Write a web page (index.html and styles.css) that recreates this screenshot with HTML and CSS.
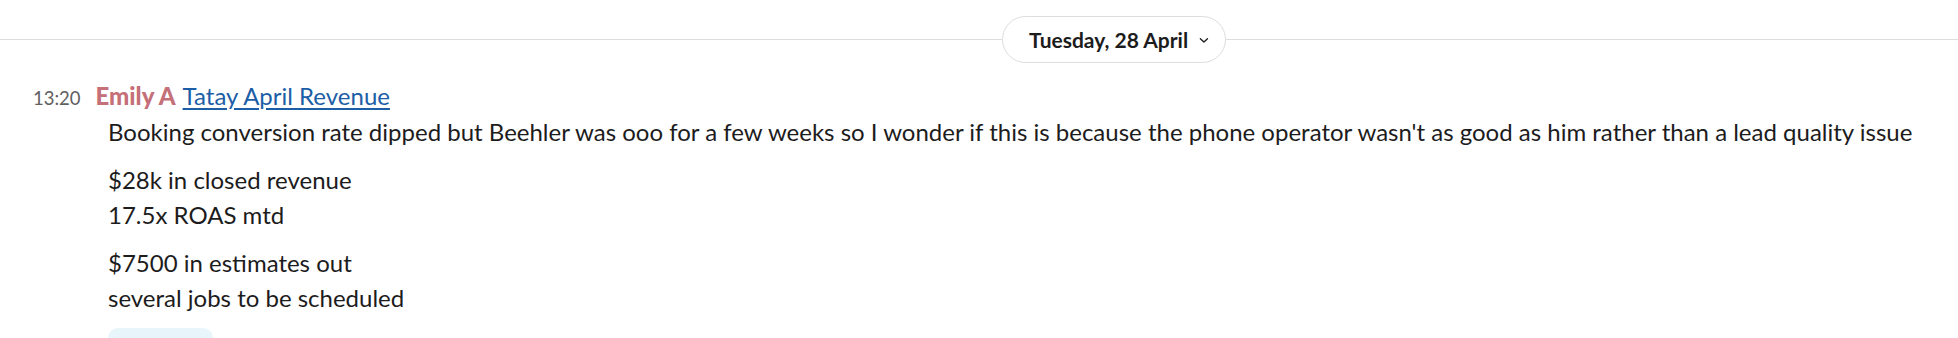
FILE: index.html
```html
<!DOCTYPE html>
<html lang="en">
<head>
<meta charset="utf-8">
<title>Message</title>
<link rel="stylesheet" href="styles.css">
</head>
<body>
<div class="day-divider">
  <div class="rule rule-left"></div>
  <button class="day-pill">
    <span class="day-label">Tuesday, 28 April</span>
    <svg class="chevron" width="11" height="7" viewBox="0 0 11 7"><path d="M1.5 1.5 L5.5 5.2 L9.5 1.5" fill="none" stroke="#1d1c1d" stroke-width="1.5" stroke-linecap="round" stroke-linejoin="round"/></svg>
  </button>
  <div class="rule rule-right"></div>
</div>
<div class="message">
  <div class="msg-header">
    <span class="time">13:20</span>
    <span class="sender">Emily A</span>
    <a class="title-link" href="#">Tatay April Revenue</a>
  </div>
  <div class="msg-body">
    <p class="para">Booking conversion rate dipped but Beehler was ooo for a few weeks so I wonder if this is because the phone operator wasn't as good as him rather than a lead quality issue</p>
    <p class="para">$28k in closed revenue<br>17.5x ROAS mtd</p>
    <p class="para">$7500 in estimates out<br>several jobs to be scheduled</p>
    <div class="reaction"></div>
  </div>
</div>
</body>
</html>
```
FILE: styles.css
```css
html, body {
  margin: 0;
  padding: 0;
  background: #ffffff;
  overflow: hidden;
}
body {
  font-family: Lato, "Noto Sans", sans-serif;
  color: #1d1c1d;
  width: 1958px;
  height: 338px;
}
.day-divider {
  display: flex;
  align-items: center;
  padding-top: 16px;
}
.rule {
  height: 1px;
  background: #dddddd;
}
.rule-left {
  width: 1002px;
}
.rule-right {
  flex: 1;
}
.day-pill {
  display: flex;
  align-items: center;
  gap: 11px;
  box-sizing: border-box;
  height: 47px;
  width: 224px;
  padding: 0 16px 0 26px;
  border: 1px solid #dddddd;
  border-radius: 24px;
  background: #ffffff;
  font-family: Lato, "Noto Sans", sans-serif;
  font-weight: 700;
  font-size: 21px;
  color: #1d1c1d;
  white-space: nowrap;
}
.chevron {
  display: block;
  margin-top: 1px;
}
.message {
  margin-top: 17px;
}
.msg-header {
  display: flex;
  align-items: baseline;
  padding-left: 33px;
  line-height: 32px;
}
.time {
  font-size: 18.5px;
  color: #616061;
  margin-right: 15px;
}
.sender {
  font-size: 24px;
  font-weight: 900;
  color: #c56f78;
  margin-right: 7px;
}
.title-link {
  font-size: 24px;
  color: #1c5ea6;
  text-decoration: underline;
  text-underline-offset: 3px;
}
.msg-body {
  padding-left: 108px;
  font-size: 24px;
  line-height: 35px;
}
.para {
  margin: 0 0 13px 0;
}
.reaction {
  width: 105px;
  height: 36px;
  border-radius: 10px;
  background: #e8f5fa;
}
```
